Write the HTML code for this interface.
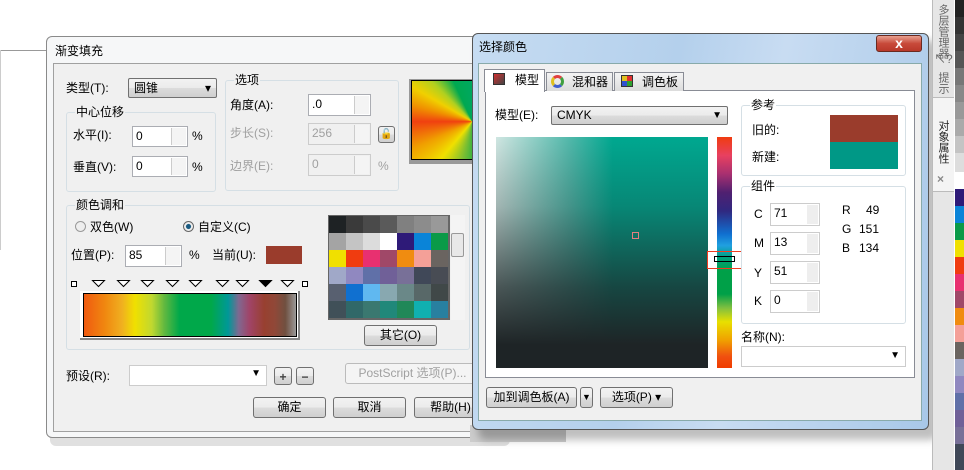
<!DOCTYPE html>
<html><head><meta charset="utf-8"><style>
*{box-sizing:border-box;margin:0;padding:0}
body{width:964px;height:470px;position:relative;overflow:hidden;background:#fff;font-family:"Liberation Sans","Noto Sans CJK SC",sans-serif;font-size:12px;color:#000}
.a{position:absolute}
.t{position:absolute;white-space:nowrap;line-height:14px}
.dis{color:#a0a0a0}
.grp{position:absolute;border:1px solid #d5dfe5;border-radius:3px}
.gl{position:absolute;top:-8px;left:8px;background:#f0f0f0;padding:0 1px;line-height:14px}
.inp{position:absolute;background:#fff;border:1px solid #abadb3}
.inp span{position:absolute;left:3px;top:2px;line-height:14px}
.spin{position:absolute;right:1px;top:1px;bottom:1px;width:15px;border-left:1px solid #ccc;background:#f4f4f4}
.btn{position:absolute;border:1px solid #707070;border-radius:3px;background:linear-gradient(#f2f2f2,#ebebeb 50%,#dcdcdc 51%,#cfcfcf);text-align:center;line-height:18px}
.sq{position:absolute;width:6px;height:6px;border:1px solid #000;background:#fff}
</style></head><body>

<div class="a" style="left:0;top:50px;width:46px;height:1px;background:#999"></div>
<div class="a" style="left:0;top:50px;width:1px;height:200px;background:#ccc"></div>

<div class="a" style="left:50px;top:40px;width:460px;height:406px;background:rgba(0,0,0,.12);border-radius:6px"></div>
<div class="a" style="left:46px;top:36px;width:460px;height:402px;background:#f6f7f8;border:1px solid #8a8a8a;border-radius:6px"></div>
<div class="t" style="left:55px;top:44px">渐变填充</div>
<div class="a" style="left:53px;top:63px;width:452px;height:369px;background:#f0f0f0;border:1px solid #a0a0a0"></div>

<div class="t" style="left:66px;top:81px">类型(T):</div>
<div class="btn" style="left:128px;top:78px;width:89px;height:20px;text-align:left;padding-left:5px;border-radius:2px">圆锥<span style="position:absolute;right:5px;top:0">▾</span></div>

<div class="grp" style="left:66px;top:112px;width:150px;height:80px"><div class="gl">中心位移</div></div>
<div class="t" style="left:73px;top:128px">水平(I):</div>
<div class="inp" style="left:132px;top:126px;width:56px;height:21px"><span>0</span><div class="spin"></div></div>
<div class="t" style="left:192px;top:129px">%</div>
<div class="t" style="left:73px;top:160px">垂直(V):</div>
<div class="inp" style="left:132px;top:156px;width:56px;height:21px"><span>0</span><div class="spin"></div></div>
<div class="t" style="left:192px;top:160px">%</div>

<div class="grp" style="left:225px;top:80px;width:174px;height:111px"><div class="gl">选项</div></div>
<div class="t" style="left:230px;top:98px">角度(A):</div>
<div class="inp" style="left:308px;top:94px;width:63px;height:22px"><span>.0</span><div class="spin"></div></div>
<div class="t dis" style="left:230px;top:126px">步长(S):</div>
<div class="inp" style="left:308px;top:123px;width:63px;height:22px;background:#f0f0f0;border-color:#ccc"><span class="dis">256</span><div class="spin"></div></div>
<div class="btn" style="left:378px;top:126px;width:17px;height:17px;font-size:10px;line-height:15px">🔓</div>
<div class="t dis" style="left:230px;top:159px">边界(E):</div>
<div class="inp" style="left:308px;top:154px;width:63px;height:22px;background:#f0f0f0;border-color:#ccc"><span class="dis">0</span><div class="spin"></div></div>
<div class="t dis" style="left:378px;top:159px">%</div>

<div class="a" style="left:409px;top:79px;width:68px;height:85px;background:#999"></div>
<div class="a" style="left:411px;top:80px;width:64px;height:80px;border:1px solid #000;background:conic-gradient(from 270deg at 97% 52%,#f04010 0deg,#f09000 15deg,#f0d000 30deg,#b0d020 45deg,#00a850 65deg,#00a860 90deg,#888 95deg,#888 175deg,#904870 185deg,#a04060 200deg,#606090 215deg,#009898 235deg,#00a850 255deg,#80c030 285deg,#f0e000 310deg,#f0a000 335deg,#f04010 360deg)"></div>

<div class="grp" style="left:66px;top:205px;width:404px;height:145px"><div class="gl">颜色调和</div></div>
<div class="a" style="left:75px;top:221px;width:11px;height:11px;border:1px solid #999;border-radius:50%;background:#eee"></div>
<div class="t" style="left:90px;top:220px">双色(W)</div>
<div class="a" style="left:183px;top:221px;width:11px;height:11px;border:1px solid #666;border-radius:50%;background:radial-gradient(#1a5a80 35%,#eee 45%)"></div>
<div class="t" style="left:198px;top:220px">自定义(C)</div>
<div class="t" style="left:71px;top:248px">位置(P):</div>
<div class="inp" style="left:125px;top:245px;width:57px;height:22px"><span>85</span><div class="spin"></div></div>
<div class="t" style="left:189px;top:248px">%</div>
<div class="t" style="left:212px;top:248px">当前(U):</div>
<div class="a" style="left:266px;top:246px;width:36px;height:18px;background:#9a3c2c"></div>

<div class="sq" style="left:71px;top:281px"></div>
<div class="sq" style="left:302px;top:281px"></div>
<svg class="a" style="left:0;top:0" width="320" height="300">
<g fill="#fff" stroke="#000" stroke-width="1">
<path d="M92.5 280.5h12l-6 6z"/><path d="M117.5 280.5h12l-6 6z"/><path d="M141.5 280.5h12l-6 6z"/><path d="M166.5 280.5h12l-6 6z"/><path d="M189.5 280.5h12l-6 6z"/><path d="M216.5 280.5h12l-6 6z"/><path d="M236.5 280.5h12l-6 6z"/><path d="M259.5 280.5h12l-6 6z" fill="#000"/><path d="M281.5 280.5h12l-6 6z"/>
</g></svg>
<div class="a" style="left:80px;top:291px;width:220px;height:49px;background:#fff;border-right:2px solid #888;border-bottom:2px solid #888"></div>
<div class="a" style="left:83px;top:293px;width:214px;height:44px;border:1px solid #000;background:linear-gradient(to right,#f05a10 0%,#f08810 10%,#f0b020 18%,#f0e000 24%,#c0d830 32%,#60b840 38%,#00a84a 45%,#00a84a 60%,#009898 68%,#806890 73%,#a04468 78%,#984030 85%,#904838 90%,#705040 95%,#999 100%)"></div>

<div class="a" style="left:328px;top:215px;width:122px;height:105px;background:#666;display:grid;grid-template-columns:repeat(7,17px);grid-auto-rows:17px;gap:0;padding:1px">
<i style="background:#1e2224"></i><i style="background:#3a3a3a"></i><i style="background:#4a4a4a"></i><i style="background:#5a5a5a"></i><i style="background:#808080"></i><i style="background:#8c8c8c"></i><i style="background:#999"></i>
<i style="background:#a4a4a4"></i><i style="background:#c4c4c4"></i><i style="background:#dcdcdc"></i><i style="background:#fff"></i><i style="background:#2e1a78"></i><i style="background:#0a84d8"></i><i style="background:#0a9a48"></i>
<i style="background:#f0e000"></i><i style="background:#f03c10"></i><i style="background:#e83070"></i><i style="background:#a04868"></i><i style="background:#f08c10"></i><i style="background:#f4a098"></i><i style="background:#6a6460"></i>
<i style="background:#a0a8c8"></i><i style="background:#9088c0"></i><i style="background:#6070a8"></i><i style="background:#706098"></i><i style="background:#787098"></i><i style="background:#404858"></i><i style="background:#484c54"></i>
<i style="background:#586070"></i><i style="background:#1070d0"></i><i style="background:#60b8f0"></i><i style="background:#88a8b0"></i><i style="background:#6a8888"></i><i style="background:#586868"></i><i style="background:#404848"></i>
<i style="background:#405058"></i><i style="background:#306868"></i><i style="background:#3a7870"></i><i style="background:#20887a"></i><i style="background:#208858"></i><i style="background:#10b0b0"></i><i style="background:#2880a0"></i>
</div>
<div class="a" style="left:451px;top:215px;width:14px;height:105px;background:#f4f4f4"></div>
<div class="a" style="left:451px;top:233px;width:13px;height:24px;border:1px solid #999;border-radius:2px;background:#e8e8e8"></div>
<div class="btn" style="left:364px;top:325px;width:73px;height:21px">其它(O)</div>

<div class="t" style="left:66px;top:369px">预设(R):</div>
<div class="a" style="left:129px;top:365px;width:138px;height:21px;background:#fff;border:1px solid #ccc"><span style="position:absolute;right:5px;top:2px;font-size:10px">▼</span></div>
<div class="btn" style="left:274px;top:367px;width:18px;height:18px;font-weight:bold;color:#444">+</div>
<div class="btn" style="left:296px;top:367px;width:18px;height:18px;font-weight:bold;color:#444">−</div>
<div class="btn" style="left:345px;top:363px;width:135px;height:21px;border-color:#bbb;background:#f4f4f4;color:#a0a0a0">PostScript 选项(P)...</div>
<div class="btn" style="left:253px;top:397px;width:73px;height:21px">确定</div>
<div class="btn" style="left:333px;top:397px;width:73px;height:21px">取消</div>
<div class="btn" style="left:414px;top:397px;width:73px;height:21px">帮助(H)</div>

<div class="a" style="left:470px;top:425px;width:96px;height:17px;background:#ccc"></div>

<div class="a" style="left:478px;top:40px;width:460px;height:400px;background:rgba(0,0,0,.25);border-radius:8px;filter:blur(4px)"></div>
<div class="a" style="left:472px;top:33px;width:457px;height:397px;border:1px solid #555;border-radius:6px;background:linear-gradient(100deg,#c6dcf2,#b4d0ec 40%,#c8dcf2 60%,#a8c8e8)"></div>
<div class="t" style="left:479px;top:40px">选择颜色</div>
<div class="a" style="left:876px;top:35px;width:46px;height:17px;border:1px solid #6a2a20;border-radius:3px;background:linear-gradient(#e8a090,#c84a3a 50%,#b8382a);color:#fff;font-weight:bold;text-align:center;line-height:15px;font-size:14px">x</div>
<div class="a" style="left:478px;top:63px;width:444px;height:358px;background:#f0f0f0;border:1px solid #8aa"></div>
<div class="a" style="left:485px;top:90px;width:430px;height:288px;background:#fff;border:1px solid #898c95"></div>
<div class="a" style="left:484px;top:69px;width:61px;height:23px;background:#fff;border:1px solid #898c95;border-bottom:none"></div>
<div class="a" style="left:493px;top:73px;width:12px;height:12px;background:linear-gradient(135deg,#d03030,#444);border:1px solid #333"></div>
<div class="t" style="left:515px;top:73px">模型</div>
<div class="a" style="left:546px;top:72px;width:67px;height:19px;background:linear-gradient(#f4f4f4,#dcdcdc);border:1px solid #898c95;border-bottom:none"></div>
<div class="a" style="left:551px;top:75px;width:13px;height:13px;border-radius:50%;border:3px solid #d08030;border-color:#e04040 #40a040 #4060d0 #e0c020"></div>
<div class="t" style="left:572px;top:75px">混和器</div>
<div class="a" style="left:614px;top:72px;width:70px;height:19px;background:linear-gradient(#f4f4f4,#dcdcdc);border:1px solid #898c95;border-bottom:none"></div>
<div class="a" style="left:621px;top:75px;width:12px;height:12px;background:conic-gradient(#e03030 0 25%,#30a030 0 50%,#3050d0 0 75%,#e0c020 0);border:1px solid #333"></div>
<div class="t" style="left:642px;top:75px">调色板</div>

<div class="t" style="left:495px;top:108px">模型(E):</div>
<div class="btn" style="left:551px;top:106px;width:177px;height:19px;text-align:left;padding-left:5px;border-radius:2px;line-height:17px">CMYK<span style="position:absolute;right:5px;top:0;font-size:10px">▼</span></div>

<div class="a" style="left:496px;top:137px;width:212px;height:231px;background:linear-gradient(to bottom,rgba(30,38,40,0) 0%,rgba(30,38,40,.25) 30%,rgba(30,38,40,.75) 65%,#1e2426 90%,#1e2426),linear-gradient(to right,#d0e6e2,#50b8aa 35%,#00a890 55%,#00a890)"></div>
<div class="a" style="left:632px;top:232px;width:7px;height:7px;border:1px solid #e08080"></div>
<div class="a" style="left:717px;top:137px;width:15px;height:231px;background:linear-gradient(#f03c10 0%,#e84060 8%,#a83070 16%,#502070 24%,#302880 32%,#1070d0 42%,#20a0e0 47%,#00a080 52%,#00a048 58%,#00a048 68%,#80c040 74%,#e8e000 80%,#f0a000 88%,#f05010 95%,#f03c00 100%)"></div>
<div class="a" style="left:707px;top:251px;width:37px;height:18px;border:1px solid #f03c20"></div>
<div class="a" style="left:714px;top:256px;width:21px;height:6px;border:1px solid #000;background:transparent"></div>

<div class="grp" style="left:741px;top:105px;width:165px;height:71px;background:#fff"><div class="gl" style="background:#fff">参考</div></div>
<div class="t" style="left:752px;top:123px">旧的:</div>
<div class="t" style="left:752px;top:150px">新建:</div>
<div class="a" style="left:830px;top:115px;width:68px;height:27px;background:#9a3c2c"></div>
<div class="a" style="left:830px;top:142px;width:68px;height:27px;background:#009886"></div>

<div class="grp" style="left:741px;top:186px;width:165px;height:138px;background:#fff"><div class="gl" style="background:#fff">组件</div></div>
<div class="t" style="left:754px;top:207px">C</div>
<div class="t" style="left:754px;top:236px">M</div>
<div class="t" style="left:754px;top:266px">Y</div>
<div class="t" style="left:754px;top:294px">K</div>
<div class="inp" style="left:770px;top:203px;width:50px;height:23px;border-color:#ccc"><span>71</span><div class="spin" style="width:11px;border:0;background:#eee"></div></div>
<div class="inp" style="left:770px;top:232px;width:50px;height:23px;border-color:#ccc"><span>13</span><div class="spin" style="width:11px;border:0;background:#eee"></div></div>
<div class="inp" style="left:770px;top:261px;width:50px;height:23px;border-color:#ccc"><span>51</span><div class="spin" style="width:11px;border:0;background:#eee"></div></div>
<div class="inp" style="left:770px;top:290px;width:50px;height:23px;border-color:#ccc"><span>0</span><div class="spin" style="width:11px;border:0;background:#eee"></div></div>
<div class="t" style="left:842px;top:203px">R</div><div class="t" style="left:866px;top:203px">49</div>
<div class="t" style="left:842px;top:222px">G</div><div class="t" style="left:859px;top:222px">151</div>
<div class="t" style="left:842px;top:241px">B</div><div class="t" style="left:859px;top:241px">134</div>

<div class="t" style="left:741px;top:330px">名称(N):</div>
<div class="a" style="left:741px;top:346px;width:165px;height:21px;border:1px solid #ccc;background:#fff"><span style="position:absolute;right:5px;top:3px;font-size:10px">▼</span></div>

<div class="btn" style="left:486px;top:387px;width:91px;height:21px">加到调色板(A)</div>
<div class="btn" style="left:580px;top:387px;width:13px;height:21px;font-size:9px">▼</div>
<div class="btn" style="left:600px;top:387px;width:73px;height:21px">选项(P) ▾</div>

<div class="a" style="left:932px;top:0;width:22px;height:470px;background:#e6e6e6;border-left:1px solid #bbb"></div>
<div class="a" style="left:932px;top:97px;width:22px;height:95px;background:#f4f4f4;border:1px solid #bbb;border-right:none"></div>
<div class="t" style="left:936px;top:4px;writing-mode:vertical-rl;font-size:11px;color:#666">多层管理器</div>
<div class="t" style="left:934px;top:52px;font-size:12px;color:#666">↖?</div>
<div class="t" style="left:936px;top:72px;writing-mode:vertical-rl;font-size:11px;color:#666">提示</div>
<div class="t" style="left:936px;top:120px;writing-mode:vertical-rl;font-size:11px;color:#222">对象属性</div>
<div class="t" style="left:937px;top:172px;color:#888;font-weight:bold">×</div>
<div class="a" style="left:955px;top:0;width:9px;height:470px;background:linear-gradient(#222 0,#222 17px,#333 17px,#333 34px,#444 34px,#444 51px,#555 51px,#555 68px,#777 68px,#777 85px,#888 85px,#888 102px,#999 102px,#999 119px,#aaa 119px,#aaa 136px,#c4c4c4 136px,#c4c4c4 153px,#ddd 153px,#ddd 172px,#fff 172px,#fff 189px,#2e1a78 189px,#2e1a78 206px,#0a84d8 206px,#0a84d8 223px,#0a9a48 223px,#0a9a48 240px,#f0e000 240px,#f0e000 257px,#f03c10 257px,#f03c10 274px,#e83070 274px,#e83070 291px,#a04868 291px,#a04868 308px,#f08c10 308px,#f08c10 325px,#f4a098 325px,#f4a098 342px,#6a6460 342px,#6a6460 359px,#a0a8c8 359px,#a0a8c8 376px,#9088c0 376px,#9088c0 393px,#6070a8 393px,#6070a8 410px,#706098 410px,#706098 427px,#787098 427px,#787098 444px,#404858 444px)"></div>
</body></html>
